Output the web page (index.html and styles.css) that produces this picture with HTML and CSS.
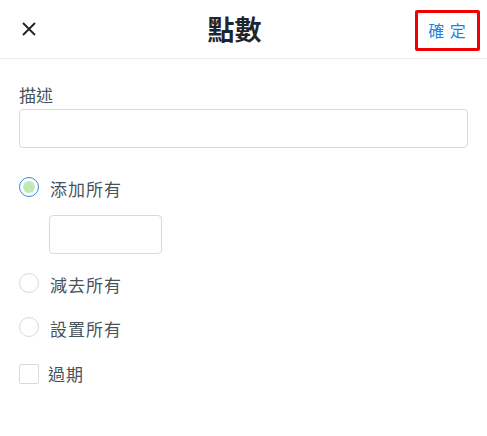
FILE: index.html
```html
<!DOCTYPE html>
<html lang="zh-Hant">
<head>
<meta charset="utf-8">
<link rel="stylesheet" href="styles.css">
</head>
<body>
<div class="page">
  <header class="header">
    <button class="close" aria-label="close">
      <svg width="14" height="14" viewBox="0 0 14 14"><path d="M1 1L13 13M13 1L1 13" stroke="#222" stroke-width="1.8" fill="none"/></svg>
    </button>
    <h1 class="title">點數</h1>
    <button class="confirm">確 定</button>
  </header>
  <main class="content">
    <label class="field-label">描述</label>
    <div class="input wide"></div>
    <div class="row first">
      <span class="radio checked"><span class="dot"></span></span>
      <span class="opt">添加所有</span>
    </div>
    <div class="input small"></div>
    <div class="row r2">
      <span class="radio"></span>
      <span class="opt">減去所有</span>
    </div>
    <div class="row r3">
      <span class="radio"></span>
      <span class="opt">設置所有</span>
    </div>
    <div class="row r4">
      <span class="check"></span>
      <span class="opt opt-check">過期</span>
    </div>
  </main>
</div>
</body>
</html>
```
FILE: styles.css
```css
* { box-sizing: border-box; }
body {
  margin: 0;
  background: #fff;
  font-family: "Noto Sans CJK TC", "Noto Sans", sans-serif;
}
.header {
  height: 59px;
  border-bottom: 1px solid #ececec;
  display: flex;
  align-items: center;
  justify-content: space-between;
  position: relative;
  padding: 0 7px 0 22px;
}
.close {
  border: 0;
  background: none;
  padding: 0;
  width: 14px;
  height: 14px;
  display: flex;
}
.title {
  position: absolute;
  left: 0;
  right: 0;
  margin: 0;
  padding-right: 18px;
  text-align: center;
  font-size: 27px;
  font-weight: 700;
  color: #1d262c;
  line-height: 56px;
  pointer-events: none;
}
.confirm {
  width: 65px;
  height: 41px;
  margin-top: 2px;
  border: 3px solid #f00000;
  border-radius: 2px;
  background: #fff;
  color: #1f84d8;
  font-family: inherit;
  font-size: 16px;
  letter-spacing: 1px;
  padding: 0;
  position: relative;
  z-index: 1;
}
.content {
  padding: 0 19px;
}
.field-label {
  display: block;
  margin-top: 25px;
  font-size: 17px;
  line-height: 22px;
  color: #47535c;
}
.input {
  border: 1px solid #d9d9d9;
  border-radius: 4px;
  background: #fff;
}
.wide {
  margin-top: 3px;
  height: 39px;
}
.small {
  margin-left: 30px;
  margin-top: 18px;
  width: 113px;
  height: 39px;
}
.row {
  display: flex;
  align-items: center;
  height: 20px;
}
.first { margin-top: 29px; }
.r2 { margin-top: 19px; }
.r3 { margin-top: 24px; }
.r4 { margin-top: 27px; }
.radio {
  width: 20px;
  height: 20px;
  border: 1px solid #dadada;
  border-radius: 50%;
  display: flex;
  align-items: center;
  justify-content: center;
  flex: none;
}
.radio.checked { border-color: #2a8ee0; }
.dot {
  width: 12px;
  height: 12px;
  border-radius: 50%;
  background: #bfeab8;
}
.check {
  width: 20px;
  height: 20px;
  border: 1px solid #dadada;
  border-radius: 2px;
  flex: none;
}
.opt {
  margin-left: 11px;
  font-size: 17px;
  letter-spacing: 1px;
  color: #47535c;
  line-height: 22px;
  position: relative;
  top: 2px;
}
.opt-check {
  margin-left: 9px;
  top: 0;
}
```
